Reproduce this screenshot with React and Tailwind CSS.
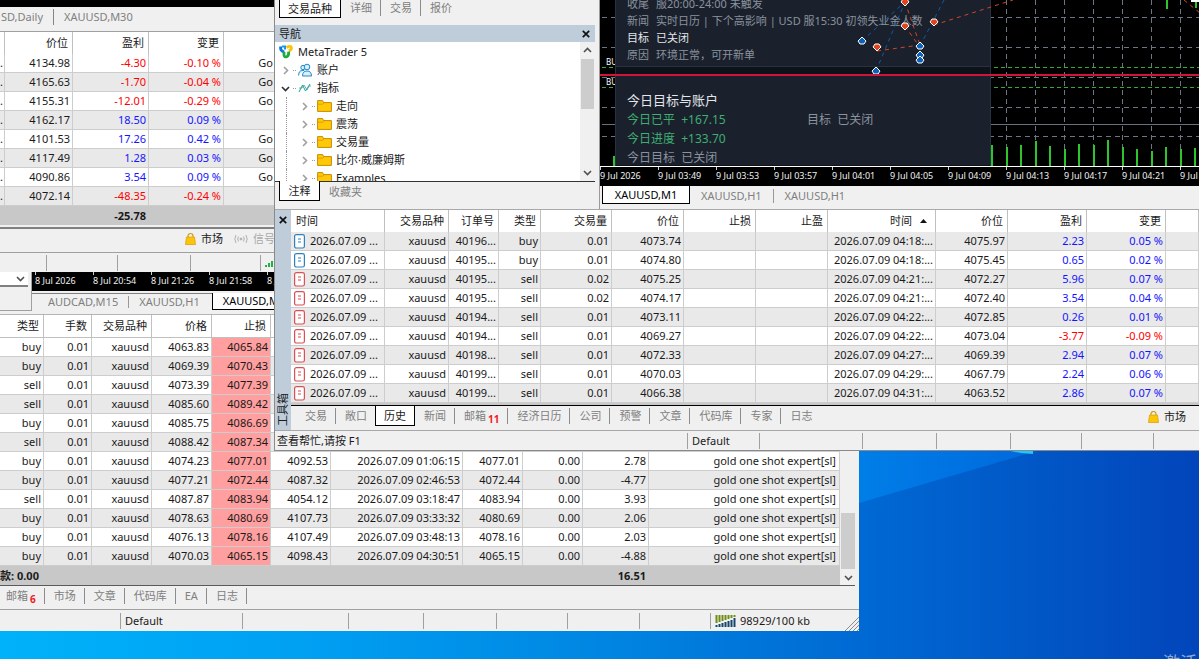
import React from "react";
import clsx from "clsx";

const sideRows = [
  ["4134.98", "-4.30", "-0.10 %", "Go"],
  ["4165.63", "-1.70", "-0.04 %", "Go"],
  ["4155.31", "-12.01", "-0.29 %", "Go"],
  ["4162.17", "18.50", "0.09 %", ""],
  ["4101.53", "17.26", "0.42 %", "Go"],
  ["4117.49", "1.28", "0.03 %", "Go"],
  ["4090.86", "3.54", "0.09 %", "Go"],
  ["4072.14", "-48.35", "-0.24 %", ""],
];

const historyRows = [
  ["40196...", "buy", "0.01", "4073.74", "04:18:...", "4075.97", "2.23", "0.05 %"],
  ["40195...", "buy", "0.01", "4074.80", "04:18:...", "4075.45", "0.65", "0.02 %"],
  ["40195...", "sell", "0.02", "4075.25", "04:21:...", "4072.27", "5.96", "0.07 %"],
  ["40195...", "sell", "0.02", "4074.17", "04:21:...", "4072.40", "3.54", "0.04 %"],
  ["40194...", "sell", "0.01", "4073.11", "04:22:...", "4072.85", "0.26", "0.01 %"],
  ["40194...", "sell", "0.01", "4069.27", "04:22:...", "4073.04", "-3.77", "-0.09 %"],
  ["40198...", "sell", "0.01", "4072.33", "04:27:...", "4069.39", "2.94", "0.07 %"],
  ["40199...", "sell", "0.01", "4070.03", "04:29:...", "4067.79", "2.24", "0.06 %"],
  ["40199...", "sell", "0.01", "4066.38", "04:31:...", "4063.52", "2.86", "0.07 %"],
];

const dealRows = [
  ["buy", "4063.83", "4065.84"],
  ["buy", "4069.39", "4070.43"],
  ["sell", "4073.39", "4077.39"],
  ["sell", "4085.60", "4089.42"],
  ["buy", "4085.75", "4086.69"],
  ["sell", "4088.42", "4087.34"],
  ["buy", "4074.23", "4077.01", "4092.53", "2026.07.09 01:06:15", "4077.01", "2.78"],
  ["buy", "4077.21", "4072.44", "4087.32", "2026.07.09 02:46:53", "4072.44", "-4.77"],
  ["sell", "4087.87", "4083.94", "4054.12", "2026.07.09 03:18:47", "4083.94", "3.93"],
  ["buy", "4078.63", "4080.69", "4107.73", "2026.07.09 03:33:32", "4080.69", "2.06"],
  ["buy", "4076.13", "4078.16", "4107.49", "2026.07.09 03:48:13", "4078.16", "2.03"],
  ["buy", "4070.03", "4065.15", "4098.43", "2026.07.09 04:30:51", "4065.15", "-4.88"],
];

const frontTimes = [
  "9 Jul 2026", "9 Jul 03:49", "9 Jul 03:53", "9 Jul 03:57", "9 Jul 04:01", "9 Jul 04:05",
  "9 Jul 04:09", "9 Jul 04:13", "9 Jul 04:17", "9 Jul 04:21", "9 Jul 04:25",
];
const backTimes = ["8 Jul 2026", "8 Jul 20:54", "8 Jul 21:26", "8 Jul 21:58", "8 Jul 22:30"];

const folders = ["走向", "震荡", "交易量", "比尔·威廉姆斯", "Examples"];

const volumes = [21, 19, 21, 25, 20, 17, 22, 21, 26, 19, 17, 15, 19, 17, 18];

const signColor = (v) => (v.startsWith("-") ? "text-[#ff0000]" : "text-[#1414ff]");

function Th({ children, left, className }) {
  return (
    <th
      className={clsx(
        "h-[22px] border-r border-[#c0c0c0] bg-white pr-1 font-normal whitespace-nowrap overflow-hidden",
        left ? "pl-[5px] text-left" : "text-right",
        className
      )}
    >
      {children}
    </th>
  );
}

function Td({ children, className }) {
  return (
    <td
      className={clsx(
        "h-[19px] border-r border-b border-[#cdcdcd] pr-0.5 text-right leading-[18px] whitespace-nowrap overflow-hidden",
        className
      )}
    >
      {children}
    </td>
  );
}

function Chevron({ dir = "down", className = "text-[#505050]" }) {
  const d = { down: "M1 3l3.5 3.5L8 3", up: "M1 6l3.5-3.5L8 6", right: "M3 1l3.5 3.5L3 8" }[dir];
  return (
    <svg className={clsx("size-[9px] shrink-0", className)} viewBox="0 0 9 9" fill="none">
      <path d={d} stroke="currentColor" strokeWidth="1.6" />
    </svg>
  );
}

function CloseButton() {
  return (
    <button aria-label="关闭" className="flex size-4 items-center justify-center">
      <svg className="size-2" viewBox="0 0 8 8">
        <path d="M.8.8l6.4 6.4M7.2.8L.8 7.2" stroke="#111" strokeWidth="1.7" />
      </svg>
    </button>
  );
}

function BagIcon() {
  return (
    <svg className="h-3 w-[11px] shrink-0" viewBox="0 0 11 12">
      <path d="M3 5V3a2.5 2.5 0 015 0v2" fill="none" stroke="#d19a14" strokeWidth="1.2" />
      <path d="M1.5 4h8l1 7.5H.5z" fill="#fdc408" stroke="#d99b00" strokeWidth=".7" />
    </svg>
  );
}

function SignalIcon() {
  return (
    <svg className="h-2.5 w-3.5 shrink-0" viewBox="0 0 14 10" fill="none" stroke="#b0b0b0">
      <circle cx="7" cy="5" r="1" fill="#b0b0b0" />
      <path d="M4.5 2.5q-1.6 2.5 0 5M9.5 2.5q1.6 2.5 0 5M2 1q-2.4 4 0 8M12 1q2.4 4 0 8" />
    </svg>
  );
}

function OrderIcon({ type }) {
  const color = type === "buy" ? "#2f80bd" : "#dc4f52";
  return (
    <svg className="h-[15px] w-[11px] shrink-0" viewBox="0 0 11 15" fill="none" stroke={color}>
      <rect x=".6" y=".6" width="9.8" height="13.4" rx="1.8" fill="#fff" strokeWidth="1.2" />
      <path d="M4 5h3M4 8h3" strokeWidth="1.1" />
    </svg>
  );
}

function Logo() {
  return (
    <svg className="size-[14px] shrink-0" viewBox="0 0 14 14" fill="none" strokeWidth="2.8">
      <path d="M1.6 1.4v2q0 2.2 3.6 3.6" stroke="#0a78d6" />
      <path d="M3 1.4h3v3" stroke="#1798ea" strokeWidth="2" />
      <path d="M7.4 2.4q4.600-2 5 .2.2 2.200-2.600 3.400" stroke="#fcc30a" />
      <path d="M5 7v3.200q.4 2.400 3 1.400 2-1 1.600-5" stroke="#1cab3c" />
    </svg>
  );
}

function FolderIcon() {
  return (
    <svg className="h-3 w-[15px] shrink-0" viewBox="0 0 15 12">
      <path d="M.6.6h5l1 2h7.8v8.8H.6z" fill="#ffc907" stroke="#c98b00" strokeWidth="1" />
      <path d="M.8 4.2h5L7 2.8" fill="none" stroke="#d99d00" strokeWidth=".9" />
    </svg>
  );
}

// inactive tab of any bottom tab strip
function Tab({ children, badge, sep = true }) {
  return (
    <button className="flex h-5 items-center text-[#808080]">
      <span className="pr-2 pl-[9px]">
        {children}
        {badge && <sub className="pl-0.5 text-[10px] leading-none font-bold text-[#ee2024]">{badge}</sub>}
      </span>
      {sep && <span className="h-4 w-px bg-[#8c8c8c]" />}
    </button>
  );
}

function StatusCell({ children, className }) {
  return (
    <div className={clsx("flex h-4 shrink-0 items-center border-r border-[#a0a0a0] pl-1", className)}>
      {children}
    </div>
  );
}

function TimeAxis({ times }) {
  return (
    <div className="flex h-[19px] overflow-hidden bg-black text-[9px] leading-3 text-[#f0f0f0]">
      {times.map((t) => (
        <div key={t} className="w-[58px] shrink-0 whitespace-nowrap">
          <div className="h-[3px] w-px bg-[#cfcfcf]" />
          <div>{t}</div>
        </div>
      ))}
    </div>
  );
}

function SideTerminal() {
  return (
    <section className="absolute top-0 left-0 w-[275px] overflow-hidden bg-[#f0f0f0]">
      <div className="h-[7px] bg-black" />
      <div className="flex h-6 items-start pt-0.5 text-[#808080]">
        <button className="w-[54px] overflow-hidden border-r border-[#858585] pr-2.5 text-right whitespace-nowrap">
          SD,Daily
        </button>
        <button className="px-2.5">XAUUSD,M30</button>
      </div>
      <table className="w-full table-fixed border-separate border-spacing-0 border-t border-[#a0a0a0]">
        <colgroup>
          <col className="w-[5px]" />
          <col className="w-[68px]" />
          <col className="w-[76px]" />
          <col className="w-[75px]" />
          <col />
        </colgroup>
        <thead>
          <tr>
            <Th />
            <Th>价位</Th>
            <Th>盈利</Th>
            <Th>变更</Th>
            <Th />
          </tr>
        </thead>
        <tbody>
          {sideRows.map(([price, profit, change, comment]) => (
            <tr key={price} className="odd:bg-white even:bg-[#e9e9e9]">
              <Td>.</Td>
              <Td>{price}</Td>
              <Td className={signColor(profit)}>{profit}</Td>
              <Td className={signColor(change)}>{change}</Td>
              <Td className="border-r-0 pr-0">{comment}</Td>
            </tr>
          ))}
          <tr className="bg-[#c8c8c8] font-bold">
            <td className="h-[19px]" />
            <td />
            <td className="pr-[3px] text-right">-25.78</td>
            <td />
            <td />
          </tr>
        </tbody>
      </table>
      <div className="mt-0.5 flex h-[25px] items-start gap-[5px] border-t-2 border-[#808080] pt-0.5 pl-[185px] whitespace-nowrap *:h-4">
        <BagIcon />
        <button>市场</button>
        <span className="w-1.5" />
        <SignalIcon />
        <button className="text-[#a8a8a8]">信号</button>
      </div>
      <div className="flex h-5 items-center border-t border-[#a0a0a0]">
        <StatusCell className="w-[47px]" />
        <StatusCell className="w-[71px]" />
        <StatusCell className="w-[73px]" />
        <StatusCell className="w-[70px]" />
        <svg className="ml-1 h-2 w-3 shrink-0" viewBox="0 0 12 8" fill="#1fb141">
          <path d="M0 6h2v2H0zM3 4h2v4H3zM6 2h2v6H6zM9 0h2v8H9z" />
        </svg>
      </div>
    </section>
  );
}

function BackTerminal() {
  return (
    <section className="absolute top-[272px] left-0 w-[859px] overflow-hidden bg-[#f0f0f0]">
      <div className="flex h-[39px]">
        <div className="w-8 border-r border-b border-[#a0a0a0]">
          <div className="flex h-[15px] w-7 items-center border-b-2 border-[#808080] bg-white">
            <select aria-label="周期" className="h-3 w-4 appearance-none outline-none">
              <option value=""></option>
            </select>
            <Chevron />
          </div>
        </div>
        <div className="flex-1">
          <div className="bg-black pl-[3px]">
            <TimeAxis times={backTimes} />
          </div>
          <div className="mt-0.5 flex leading-4 text-[#808080]">
            <div className="flex items-center border-t border-[#808080] pl-1.5">
              <button className="border-r border-[#999] px-2.5 leading-3">AUDCAD,M15</button>
              <button className="pr-3 pl-2.5 leading-3">XAUUSD,H1</button>
            </div>
            <button className="h-[17px] w-[100px] border border-t-0 border-black bg-white pl-2.5 text-left text-black">
              XAUUSD,M5
            </button>
          </div>
        </div>
      </div>
      <div className="mt-[3px] flex border-t border-[#b4b4b4]">
        <table className="flex-1 table-fixed border-separate border-spacing-0">
          <colgroup>
            <col className="w-[44px]" />
            <col className="w-[48px]" />
            <col className="w-[60px]" />
            <col className="w-[60px]" />
            <col className="w-[59px]" />
            <col className="w-[60px]" />
            <col className="w-[132px]" />
            <col className="w-[60px]" />
            <col className="w-[60px]" />
            <col className="w-[66px]" />
            <col />
          </colgroup>
          <thead>
            <tr className="[&>th]:h-[23px] [&>th]:border-b">
              <Th>类型</Th>
              <Th>手数</Th>
              <Th>交易品种</Th>
              <Th>价格</Th>
              <Th>止损</Th>
              <Th />
              <Th />
              <Th />
              <Th />
              <Th />
              <Th />
            </tr>
          </thead>
          <tbody>
            {dealRows.map(([type, price, sl, tp, time, close, profit], i) => (
              <tr key={i} className="odd:bg-white even:bg-[#e9e9e9]">
                <Td>{type}</Td>
                <Td>0.01</Td>
                <Td>xauusd</Td>
                <Td>{price}</Td>
                <Td className="bg-[#ff9f9f]">{sl}</Td>
                <Td>{tp}</Td>
                <Td>{time}</Td>
                <Td>{close}</Td>
                <Td>{tp && "0.00"}</Td>
                <Td>{profit}</Td>
                <Td className="pr-[3px]">{tp && "gold one shot expert[sl]"}</Td>
              </tr>
            ))}
            <tr className="bg-[#c8c8c8] font-bold">
              <td colSpan={9} className="h-[19px]">
                款: 0.00
              </td>
              <td className="pr-[3px] text-right">16.51</td>
              <td />
            </tr>
          </tbody>
        </table>
        <div className="mr-[3px] flex w-4 flex-col items-center justify-end">
          <div className="h-14 w-3.5 bg-[#cdcdcd]" />
          <div className="flex h-4 items-center">
            <Chevron />
          </div>
        </div>
      </div>
      <div className="mr-1 h-px bg-[#5a5a5a]" />
      <div className="flex h-[23px] items-start">
        <div className="-ml-[3px] flex">
          <Tab badge="6">邮箱</Tab>
          <Tab>市场</Tab>
          <Tab>文章</Tab>
          <Tab>代码库</Tab>
          <Tab>EA</Tab>
          <Tab>日志</Tab>
        </div>
      </div>
      <div className="flex h-[22px] items-center border-t border-[#a0a0a0]">
        <StatusCell className="w-[121px]" />
        <StatusCell className="w-[122px]">Default</StatusCell>
        <StatusCell className="w-[106px]" />
        <StatusCell className="w-[75px]" />
        <StatusCell className="w-[73px]" />
        <StatusCell className="w-[71px]" />
        <StatusCell className="w-[72px]" />
        <StatusCell className="w-[71px]" />
        <svg className="ml-1 h-3 w-[22px]" viewBox="0 0 22 12">
          <path d="M1.5 0v8M4.5 0v7M7.500 0v6M10.500 0v5M13.500 0v4M16.500 0v3M19.500 0v2" stroke="#6f8c14" strokeWidth="2" />
          <path d="M1.500 10v2M4.500 9v3M7.500 8v4M10.500 7v5M13.500 6v6M16.500 5v7M19.500 3v9" stroke="#15466b" strokeWidth="2" />
        </svg>
        <span className="pl-[3px]">98929/100 kb</span>
        <svg className="mt-auto ml-auto size-3.5" viewBox="0 0 14 14" stroke="#8c8c8c">
          <path d="M0 14L14 0M4 14L14 4M8 14l6-6M12 14l2-2" />
        </svg>
      </div>
    </section>
  );
}

function Navigator() {
  return (
    <div className="flex w-[320px] shrink-0 flex-col">
      <div className="flex h-[25px] items-start pl-1">
        <button className="h-[18px] w-[62px] border border-t-0 border-black bg-white leading-[14px]">交易品种</button>
        <div className="-mt-0.5 flex">
          <Tab>详细</Tab>
          <Tab>交易</Tab>
          <Tab sep={false}>报价</Tab>
        </div>
      </div>
      <div className="flex h-[17px] items-center justify-between bg-[#bfcddb] pr-px pl-1">
        <span>导航</span>
        <CloseButton />
      </div>
      <div className="flex h-[140px] overflow-hidden border-b border-[#333] bg-white">
        <ul className="flex-1 leading-[18px]">
          <li className="mt-px flex h-[18px] items-center gap-[5px] pl-1">
            <Logo />
            MetaTrader 5
          </li>
          <li className="flex h-[18px] items-center pl-1.5">
            <Chevron dir="right" className="text-[#a0a0a0]" />
            <span className="mr-0.5 ml-[3px] w-[3px] border-t border-dotted border-[#999]" />
            <svg className="mr-[5px] size-3.5" viewBox="0 0 14 14" fill="#d8effc" stroke="#2488c8">
              <circle cx="5" cy="4.500" r="2.200" />
              <path d="M.6 12.500q0-5 3.600-5h2" />
              <circle cx="9" cy="4" r="2.800" />
              <path d="M4.500 13q0-5 4.500-5t4.500 5z" />
            </svg>
            账户
          </li>
          <li className="flex h-[18px] items-center pl-1.5">
            <Chevron className="text-[#303030]" />
            <span className="mr-0.5 ml-[3px] w-[3px] border-t border-dotted border-[#999]" />
            <svg className="mr-[5px] size-3.5" viewBox="0 0 14 14" fill="none">
              <path d="M1 11L4.500 4l3 6L12 3" stroke="#27a958" />
              <path d="M1 7h3l2-3 3 5 2-4h2" stroke="#3a9ad9" strokeWidth=".8" />
            </svg>
            指标
          </li>
          {folders.map((name) => (
            <li key={name} className="flex h-[18px] items-center pl-[11px]">
              <span className="h-full w-[14px] border-l border-dotted border-[#999]" />
              <Chevron dir="right" className="text-[#a0a0a0]" />
              <span className="mr-0.5 ml-[3px] w-[3px] border-t border-dotted border-[#999]" />
              <FolderIcon />
              <span className="pl-1">{name}</span>
            </li>
          ))}
        </ul>
        <div className="flex w-[15px] flex-col items-center justify-between bg-[#f0f0f0] pb-1">
          <div>
            <div className="flex h-[17px] items-center justify-center">
              <Chevron dir="up" />
            </div>
            <div className="h-[50px] w-[13px] bg-[#cdcdcd]" />
          </div>
          <Chevron />
        </div>
      </div>
      <div className="flex h-[27px] items-start pl-1">
        <button className="-mt-px h-5 w-[41px] border border-t-0 border-black bg-white">注释</button>
        <Tab sep={false}>收藏夹</Tab>
      </div>
    </div>
  );
}

const buys = [[262, 41], [276, 71], [320, 46], [320, 55], [320, 60]];
const sells = [[277, 47], [305, 2], [305, 26], [334, 22]];

function Chart() {
  return (
    <div className="flex min-w-0 flex-1 flex-col">
      <div className="relative h-[166px] overflow-hidden bg-black">
        <svg className="absolute inset-0 h-full w-full">
          <g stroke="#6b7682" strokeDasharray="5 4">
            {[17, 47, 77, 107, 136].map((y) => (
              <line key={y} x1="2" x2="100%" y1={y + 0.5} y2={y + 0.5} />
            ))}
            {[407, 436, 465, 494, 523, 552, 581].map((x) => (
              <line key={x} x1={x - 0.5} x2={x - 0.5} y1="0" y2="166" />
            ))}
          </g>
          <line x1="2" x2="100%" y1="124.5" y2="124.5" stroke="#64737f" />
          <g stroke="#2fae2f" strokeDasharray="4 3">
            <line x1="2" x2="100%" y1="67.5" y2="67.5" />
            <line x1="2" x2="100%" y1="87.5" y2="87.5" />
          </g>
          <g fill="#2dc42d">
            <rect x="13" y="156" width="2" height="10" />
            {volumes.map((h, i) => (
              <rect key={i} x={391 + Math.round(i * 14.5)} y={166 - h} width="2" height={h} />
            ))}
            <rect x="566" y="0" width="2" height="9" />
            <rect x="595" y="0" width="2" height="8" />
          </g>
          <rect x="591" y="0" width="9" height="2" fill="#fff" />
        </svg>
        <div className="absolute top-[54px] left-1.5 text-[8px] leading-4 text-white">BU</div>
        <div className="absolute top-[74px] left-1.5 text-[8px] leading-4 text-white">BU</div>
        <div className="absolute top-0 left-[15px] h-full w-[376px] border-x border-[#273240] bg-[#0e131b]">
          <div className="h-[72px] border-b border-[#273240] bg-[#1a212d] pl-[11px] leading-[17px] text-[#8a929d]">
            <div className="-mt-[5px] flex gap-[7px]"><span>收尾</span><span>服20:00-24:00 未触发</span></div>
            <div className="flex gap-[7px]"><span>新闻</span><span>实时日历 | 下个高影响 | USD 服15:30 初领失业金人数</span></div>
            <div className="flex gap-[7px] text-[#e3e6ea]"><span>目标</span><span>已关闭</span></div>
            <div className="flex gap-[7px]"><span>原因</span><span>环境正常，可开新单</span></div>
          </div>
          <div className="mt-2 h-[90px] border-t border-[#273240] bg-[#1a212d] pt-[15px] pl-[11px] text-[12px] leading-[19px] text-[#8a929d]">
            <div className="text-[13px] text-[#e3e6ea]">今日目标与账户</div>
            <div className="flex">
              <span className="w-[180px] text-[#3fae72]">今日已平&nbsp; +167.15</span>
              <span>目标&nbsp; 已关闭</span>
            </div>
            <div className="text-[#3fae72]">今日进度&nbsp; +133.70</div>
            <div>今日目标&nbsp; 已关闭</div>
          </div>
        </div>
        <svg className="absolute inset-0 h-full w-full" fill="none">
          <g stroke="#0d5ba8" strokeDasharray="4 4">
            <path d="M262 41L307 0M276 71L305 2M320 46L344 0" />
          </g>
          <g stroke="#cf4523" strokeDasharray="4 4">
            <path d="M277 51L320 45M305 2L320 45M305 26L319 46M334 25L413 0M584 0L600 13" />
          </g>
          <g stroke="#fff" strokeWidth="1">
            {sells.map(([x, y]) => (
              <path key={x + "-" + y} d={`M${x} ${y + 4}l-4-4 2-3h4l2 3z`} fill="#e0451f" />
            ))}
            {buys.map(([x, y]) => (
              <path key={x + "-" + y} d={`M${x} ${y - 4}l4 4-2 3h-4l-2-3z`} fill="#0b62b8" />
            ))}
          </g>
          <line x1="0" x2="100%" y1="75" y2="75" stroke="#d0153c" strokeWidth="2" />
        </svg>
      </div>
      <div className="border-t border-white">
        <TimeAxis times={frontTimes} />
      </div>
      <div className="flex h-[23px] items-start pl-0.5 leading-4 text-[#808080]">
        <button className="h-[18px] w-[88px] border border-t-0 border-black bg-white text-black">XAUUSD,M1</button>
        <button className="mt-[3px] border-r border-[#999] px-[11px] leading-[14px]">XAUUSD,H1</button>
        <button className="mt-[3px] px-[11px] leading-[14px]">XAUUSD,H1</button>
      </div>
    </div>
  );
}

function Toolbox() {
  return (
    <div className="flex border-y border-[#a8a8a8]">
      <div className="flex w-4 shrink-0 flex-col items-center justify-between bg-[#bfcddb] pt-0.5 pb-1">
        <CloseButton />
        <span className="rotate-180 leading-4 [writing-mode:vertical-rl] [text-orientation:sideways]">工具箱</span>
      </div>
      <div className="min-w-0 flex-1">
        <table className="w-full table-fixed border-separate border-spacing-0">
          <colgroup>
            <col className="w-[94px]" />
            <col className="w-[64px]" />
            <col className="w-[50px]" />
            <col className="w-[42px]" />
            <col className="w-[71px]" />
            <col className="w-[72px]" />
            <col className="w-[72px]" />
            <col className="w-[72px]" />
            <col className="w-[108px]" />
            <col className="w-[72px]" />
            <col className="w-[79px]" />
            <col className="w-[79px]" />
            <col />
          </colgroup>
          <thead>
            <tr>
              <Th left>时间</Th>
              <Th>交易品种</Th>
              <Th>订单号</Th>
              <Th>类型</Th>
              <Th>交易量</Th>
              <Th>价位</Th>
              <Th>止损</Th>
              <Th>止盈</Th>
              <Th>
                <span className="flex items-center justify-end gap-2 pr-1">
                  时间
                  <svg className="h-1 w-[7px]" viewBox="0 0 7 4">
                    <path d="M0 4l3.500-4L7 4z" fill="#111" />
                  </svg>
                </span>
              </Th>
              <Th>价位</Th>
              <Th>盈利</Th>
              <Th>变更</Th>
              <Th />
            </tr>
          </thead>
          <tbody>
            {historyRows.map(([order, type, volume, open, time, close, profit, change], i) => (
              <tr key={i} className="odd:bg-[#e9e9e9] even:bg-white">
                <Td>
                  <span className="flex items-center gap-[5px] pl-[3px]">
                    <OrderIcon type={type} />
                    2026.07.09 ...
                  </span>
                </Td>
                <Td>xauusd</Td>
                <Td>{order}</Td>
                <Td>{type}</Td>
                <Td>{volume}</Td>
                <Td>{open}</Td>
                <Td />
                <Td />
                <Td>2026.07.09 {time}</Td>
                <Td>{close}</Td>
                <Td className={signColor(profit)}>{profit}</Td>
                <Td className={signColor(change)}>{change}</Td>
                <Td />
              </tr>
            ))}
          </tbody>
        </table>
        <div className="h-[3px] border-b border-black bg-[#c8c8c8]" />
        <div className="flex h-6 items-start justify-between">
          <div className="flex pl-[5px]">
            <Tab>交易</Tab>
            <Tab sep={false}>敞口</Tab>
            <button className="h-5 w-10 border border-t-0 border-black bg-white leading-[18px]">历史</button>
            <Tab>新闻</Tab>
            <Tab badge="11">邮箱</Tab>
            <Tab>经济日历</Tab>
            <Tab>公司</Tab>
            <Tab>预警</Tab>
            <Tab>文章</Tab>
            <Tab>代码库</Tab>
            <Tab>专家</Tab>
            <Tab sep={false}>日志</Tab>
          </div>
          <button className="flex h-[22px] items-center gap-[5px] pr-[13px]">
            <BagIcon />
            市场
          </button>
        </div>
      </div>
    </div>
  );
}

function FrontTerminal() {
  return (
    <section className="absolute top-0 right-0 left-[274px] overflow-hidden border-b border-l border-[#8a8a8a] bg-[#f0f0f0]">
      <div className="flex">
        <Navigator />
        <div className="ml-1 flex min-w-0 flex-1 border-l border-[#9a9a9a]">
          <Chart />
        </div>
      </div>
      <Toolbox />
      <div className="flex h-[19px] items-center">
        <div className="flex h-4 w-[413px] shrink-0 items-center border-r border-[#a0a0a0] pl-0.5">查看帮忙,请按 F1</div>
        <StatusCell className="w-[72px]">Default</StatusCell>
        <StatusCell className="w-[103px]" />
        <StatusCell className="w-[74px]" />
        <StatusCell className="w-[74px]" />
        <StatusCell className="w-[71px]" />
        <StatusCell className="w-[72px]" />
      </div>
    </section>
  );
}

function Wallpaper() {
  return (
    <svg className="absolute inset-0 h-full w-full" viewBox="0 0 1199 659" preserveAspectRatio="none">
      <defs>
        <linearGradient id="sky" x1="0" y1="0" x2="1" y2="0">
          <stop offset="0" stopColor="#00b2f9" />
          <stop offset=".25" stopColor="#00a0f3" />
          <stop offset=".5" stopColor="#0086e2" />
          <stop offset=".72" stopColor="#0069d3" />
          <stop offset="1" stopColor="#0245ba" />
        </linearGradient>
        <linearGradient id="beam" x1="0" y1="0" x2="1" y2="0">
          <stop offset="0" stopColor="#007ee8" />
          <stop offset="1" stopColor="#0064da" />
        </linearGradient>
      </defs>
      <rect width="1199" height="659" fill="url(#sky)" />
      <path d="M859 440h215L859 503z" fill="url(#beam)" />
      <path d="M1005 450h28v4l-12-1z" fill="#22c8f5" />
    </svg>
  );
}

export default function App() {
  return (
    <main className="relative h-screen w-full overflow-hidden bg-[#0069d3] font-['Noto_Sans','Noto_Sans_CJK_SC',sans-serif] text-[11px] leading-4 text-[#1a1a1a]">
      <Wallpaper />
      <div className="absolute right-0 bottom-[-14px] w-9 overflow-hidden text-[17px] leading-5 whitespace-nowrap text-[#8fa9cf]">
        激活
      </div>
      <SideTerminal />
      <BackTerminal />
      <FrontTerminal />
    </main>
  );
}
